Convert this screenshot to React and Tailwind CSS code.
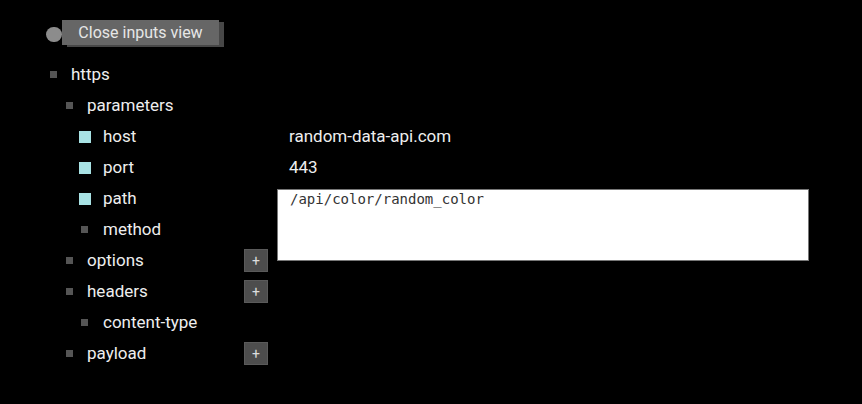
import React from 'react';

const rows = [
  { label: 'https', level: 0 },
  { label: 'parameters', level: 1 },
  { label: 'host', level: 2, active: true, value: 'random-data-api.com' },
  { label: 'port', level: 2, active: true, value: '443' },
  { label: 'path', level: 2, active: true, area: '/api/color/random_color' },
  { label: 'method', level: 2 },
  { label: 'options', level: 1, add: true },
  { label: 'headers', level: 1, add: true },
  { label: 'content-type', level: 2 },
  { label: 'payload', level: 1, add: true },
];

const rowPad = (r) => {
  if (r.level === 0) return 'pl-[50px] gap-[14px]';
  if (r.level === 1) return 'pl-[66px] gap-[14px]';
  if (r.active) return 'pl-[79px] gap-[12px]';
  return 'pl-[81px] gap-[15px]';
};

const Bullet = ({ active }) =>
  active ? (
    <span className="w-[12px] h-[12px] bg-[#a8e2e4] shrink-0" />
  ) : (
    <span className="w-[7px] h-[7px] bg-[#555] shrink-0" />
  );

const App = () => {
  return (
    <div className="w-[862px] h-[404px] bg-black text-[#eeeeee] overflow-hidden font-['Roboto','Liberation_Sans',sans-serif]">
      {/* header button */}
      <div className="flex items-start pl-[46px] pt-[20px] h-[59px]">
        <span className="w-[16px] h-[15px] rounded-full bg-[#8c8c8c] mt-[7px]" />
        <button className="h-[25px] w-[157px] bg-[#666] shadow-[5px_2px_0_#474747] text-[16px] text-[#e6e6e6] leading-[25px] text-center">
          Close inputs view
        </button>
      </div>

      <div className="grid grid-cols-[244px_33px_532px] auto-rows-[31px]">
        {rows.map((r, i) => (
          <React.Fragment key={r.label}>
            <div className={`flex items-center text-[17px] ${rowPad(r)}`}>
              <Bullet active={r.active} />
              <span>{r.label}</span>
            </div>
            <div className="flex items-center">
              {r.add && (
                <span className="w-[24px] h-[23px] bg-[#4d4d4d] border border-[#5a5a5a] flex items-center justify-center text-[#ddd] text-[14px] leading-none">
                  +
                </span>
              )}
            </div>
            {r.value && (
              <div className="flex items-center pl-[12px] text-[17px]">{r.value}</div>
            )}
            {r.area && (
              <div className="row-span-3 pt-[6px]">
                <div className="h-[72px] bg-white border border-[#777] pl-[12px] font-['DejaVu_Sans_Mono',monospace] text-[14px] leading-[18px] text-[#333]">
                  {r.area}
                </div>
              </div>
            )}
            {!r.value && !r.area && !(i === 5 || i === 6) && <div />}
          </React.Fragment>
        ))}
      </div>
    </div>
  );
};

export default App;
